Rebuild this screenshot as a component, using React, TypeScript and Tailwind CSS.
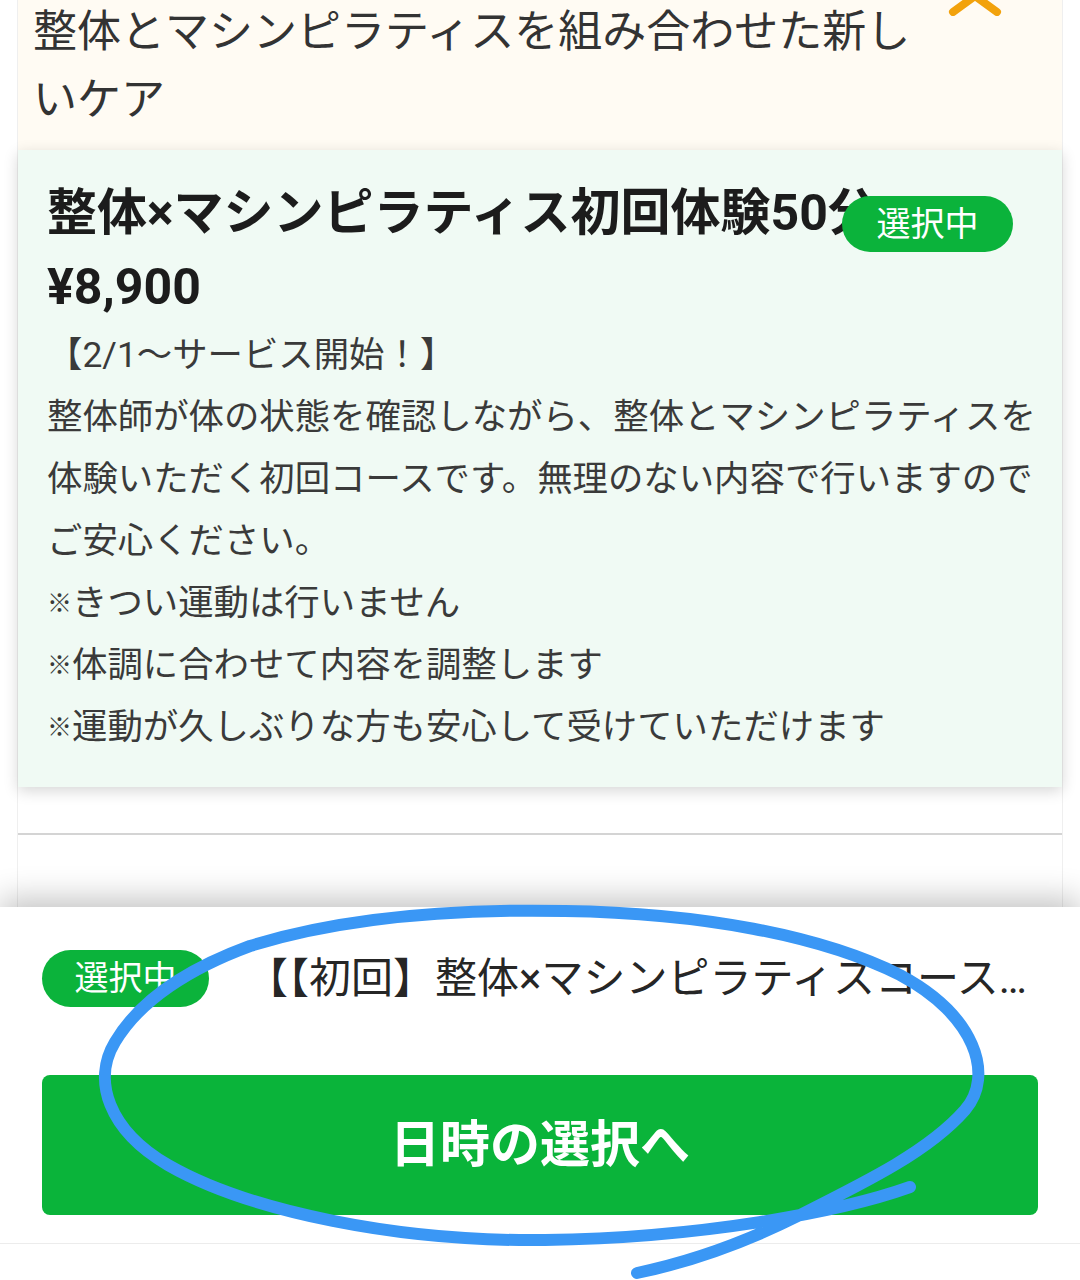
import React from "react";

const introLines = [
  "【2/1〜サービス開始！】",
  "整体師が体の状態を確認しながら、整体とマシンピラティスを",
  "体験いただく初回コースです。無理のない内容で行いますので",
  "ご安心ください。",
];

const notes = [
  "きつい運動は行いません",
  "体調に合わせて内容を調整します",
  "運動が久しぶりな方も安心して受けていただけます",
];

function Badge({ className }: { className: string }) {
  return (
    <span
      className={`flex items-center justify-center rounded-full bg-[#0bb33b] text-[34px] text-white ${className}`}
    >
      選択中
    </span>
  );
}

export default function App() {
  return (
    <div className="relative w-[1080px] min-h-[1280px] overflow-hidden bg-white font-['Roboto','Noto_Sans_CJK_JP',sans-serif]">
      <div className="mx-[17px] border-x border-[#efefef]">
        {/* Course intro */}
        <div className="flex h-[150px] overflow-hidden bg-[#fffbf3] pl-[15px]">
          <p className="-mt-[2px] w-[900px] text-[44px] leading-[68px] text-[#333333]">
            整体とマシンピラティスを組み合わせた新しいケア
          </p>
          <svg
            className="-mt-[14px] ml-[10px] h-[30px] w-[64px] shrink-0"
            viewBox="0 0 64 30"
            fill="none"
          >
            <path
              d="M10 26 L32 10 L54 26"
              stroke="#f2a20c"
              strokeWidth="8"
              strokeLinecap="round"
              strokeLinejoin="round"
            />
          </svg>
        </div>

        {/* Selected menu card */}
        <div className="relative bg-[#f0faf4] px-[29px] pt-[26px] pb-[29px] shadow-[0_4px_14px_rgba(0,0,0,0.16)]">
          <h2 className="whitespace-nowrap text-[50px] font-bold leading-[74px] text-[#1c1c1c]">
            整体×マシンピラティス初回体験50分
          </h2>
          <Badge className="absolute right-[49px] top-[46px] h-[56px] w-[171px]" />
          <p className="text-[50px] font-bold leading-[74px] text-[#1c1c1c]">¥8,900</p>
          <div className="text-[35.4px] leading-[62px] text-[#3a3a3a]">
            {introLines.map((line) => (
              <p key={line} className="whitespace-nowrap">
                {line}
              </p>
            ))}
            {notes.map((line) => (
              <p key={line} className="whitespace-nowrap">
                <span className="align-[3px] text-[25px] leading-none">※</span>
                {line}
              </p>
            ))}
          </div>
        </div>

        <div className="h-[46px]" />
        <div className="h-[2px] bg-[#d4d4d4]" />
        <div className="h-[72px]" />
      </div>

      {/* Bottom action bar */}
      <div className="relative z-10 bg-white pt-[43px] shadow-[0_-8px_30px_rgba(0,0,0,0.24)]">
        <div className="flex h-[57px] items-center gap-[37px] px-[42px]">
          <Badge className="h-[57px] w-[167px] shrink-0" />
          <p className="min-w-0 flex-1 truncate text-[42px] leading-[57px] text-[#262626]">
            【【初回】整体×マシンピラティスコース】整体×マシンピラティス初回体験50分
          </p>
        </div>
        <button className="mx-[42px] mt-[68px] flex h-[140px] w-[996px] items-center justify-center rounded-[8px] bg-[#0ab43a] text-[50px] font-bold text-white">
          日時の選択へ
        </button>
        <div className="mt-[28px] h-[37px] border-t border-[#ececec]" />
      </div>

      {/* Hand-drawn annotation */}
      <svg
        className="pointer-events-none absolute left-0 top-0 z-20"
        width="1080"
        height="1280"
        viewBox="0 0 1080 1280"
        fill="none"
      >
        <path
          d="M910 1187 C840 1212 700 1238 545 1240 C400 1242 250 1212 168 1165 C108 1130 92 1080 115 1042 C140 1000 190 968 250 946 C350 915 465 909 565 911 C700 913 820 935 900 975 C975 1015 995 1075 965 1110 C930 1150 870 1180 800 1215 C740 1245 690 1262 637 1273"
          stroke="#3a97f5"
          strokeWidth="12"
          strokeLinecap="round"
          strokeLinejoin="round"
        />
      </svg>
    </div>
  );
}
